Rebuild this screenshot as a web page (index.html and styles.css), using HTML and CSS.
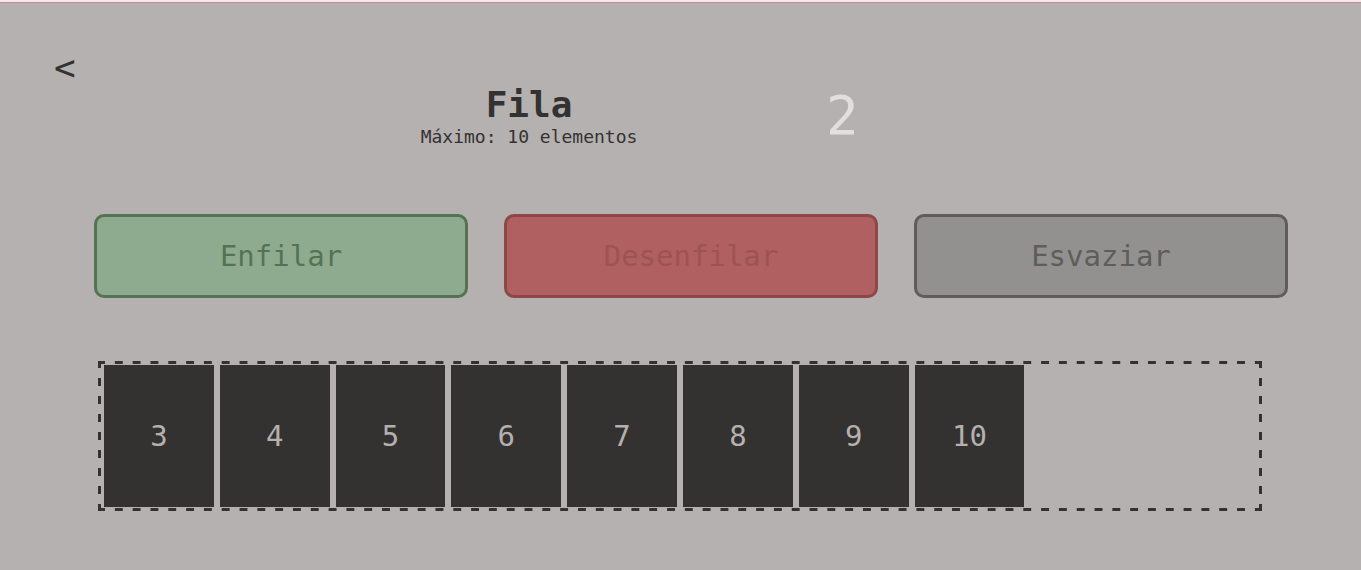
FILE: index.html
```html
<!DOCTYPE html>
<html lang="pt-BR">
<head>
<meta charset="utf-8">
<title>Fila</title>
<link rel="stylesheet" href="styles.css">
</head>
<body>
<main class="page">
<header class="header">
<a class="back" href="#">&lt;</a>
<div class="heading">
<h1 class="title">Fila</h1>
<p class="subtitle">Máximo: 10 elementos</p>
</div>
<output class="removed">2</output>
</header>
<div class="actions">
<button class="action enqueue" type="button">Enfilar</button>
<button class="action dequeue" type="button">Desenfilar</button>
<button class="action clear" type="button">Esvaziar</button>
</div>
<ol class="queue">
<li class="item">3</li>
<li class="item">4</li>
<li class="item">5</li>
<li class="item">6</li>
<li class="item">7</li>
<li class="item">8</li>
<li class="item">9</li>
<li class="item">10</li>
</ol>
</main>
</body>
</html>
```
FILE: styles.css
```css
* {
  box-sizing: border-box;
}

body {
  margin: 0;
  min-height: 100vh;
  background: #b5b1b0;
  border-top: 2px solid #f9e6ea;
  color: #343230;
  font-family: "DejaVu Sans Mono", monospace;
}

.page {
  border-top: 1px solid #b58f92;
}

.header {
  display: grid;
  grid-template-columns: 178fr 594fr 535fr;
  padding: 47px 0 0 54px;
}

.back {
  color: inherit;
  font-size: 36px;
  line-height: 36px;
  text-decoration: none;
}

.heading {
  padding-top: 34px;
  text-align: center;
}

.title {
  margin: 0;
  font-size: 36px;
  line-height: 42px;
}

.subtitle {
  margin: 0;
  font-size: 18px;
  line-height: 22px;
}

.removed {
  padding-top: 34px;
  font-size: 54px;
  line-height: 63px;
  color: #e2e0df;
}

.actions {
  display: grid;
  grid-template-columns: repeat(3, 1fr);
  gap: 36px;
  margin: 66px 73px 0 94px;
}

.action {
  height: 84px;
  border: 3px solid;
  border-radius: 10px;
  font-family: inherit;
  font-size: 29px;
}

.enqueue {
  background: #8fab8f;
  border-color: #547353;
  color: #557354;
}

.dequeue {
  background: #b06060;
  border-color: #8b4846;
  color: #9d5351;
}

.clear {
  background: #93918f;
  border-color: #5e5d5b;
  color: #5e5d5b;
}

/* Dashes are tiled gradients so that their rhythm fits each side evenly. */
.queue {
  --ink: #343230;
  --across: linear-gradient(90deg, var(--ink) 4px, transparent 4px calc(100% - 4px), var(--ink) calc(100% - 4px));
  --down: linear-gradient(var(--ink) 4px, transparent 4px calc(100% - 4px), var(--ink) calc(100% - 4px));
  display: flex;
  gap: 6px;
  height: 150px;
  margin: 63px 99px 0 98px;
  padding: 1px 3px;
  border: 3px solid transparent;
  background:
    var(--across) 0 -3px / calc(100% / 65) 3px round no-repeat,
    var(--across) 0 calc(100% + 3px) / calc(100% / 65) 3px round no-repeat,
    var(--down) -3px 0 / 3px 18px no-repeat round,
    var(--down) calc(100% + 3px) 0 / 3px 18px no-repeat round;
  background-clip: border-box;
  background-origin: padding-box;
  list-style: none;
}

.item {
  display: grid;
  place-items: center;
  width: calc((100% - 54px) / 10);
  background: #343230;
  color: #b4b0af;
  font-size: 29px;
}
```
